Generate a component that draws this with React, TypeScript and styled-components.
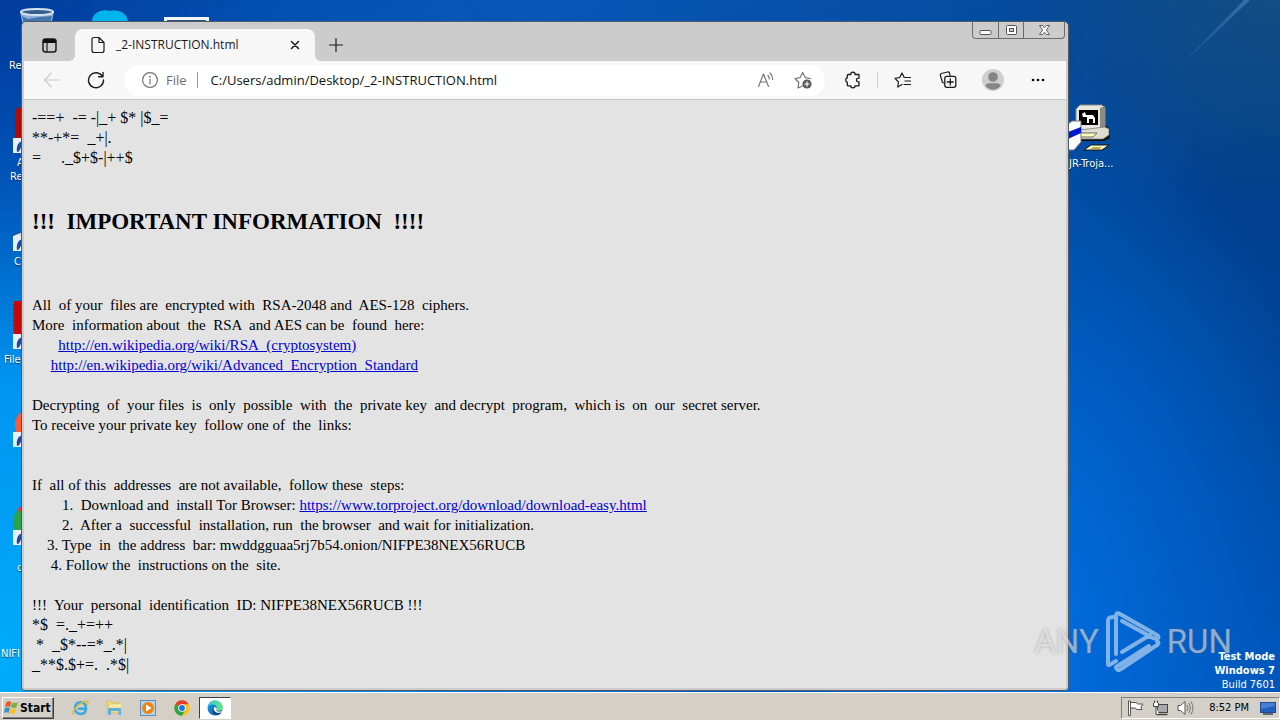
import React from "react";
import styled, { createGlobalStyle, css } from "styled-components";

const uiFont = `"Open Sans", "Noto Sans", sans-serif`;
const shellFont = `"DejaVu Sans Condensed", "DejaVu Sans", sans-serif`;
const pageFont = `"Liberation Serif", "Times New Roman", serif`;

const GlobalStyle = createGlobalStyle`
  * { box-sizing: border-box; }
  body { margin: 0; background: #0058b8; }
  button { border: 0; padding: 0; margin: 0; background: none; font: inherit; color: inherit; }
  svg { display: block; flex: none; }
`;

const Screen = styled.div`
  display: flex;
  flex-direction: column;
  min-height: 100vh;
`;

const Desktop = styled.main`
  position: relative;
  flex: 1;
  display: flex;
  padding: 21px 211px 1px 21px;
  overflow: hidden;
  background:
    radial-gradient(ellipse 35% 55% at 0% 0%, #003c9e 0%, rgba(0, 60, 158, 0.6) 45%, transparent 100%),
    radial-gradient(ellipse 22% 30% at 100% 0%, rgba(24, 78, 128, 0.8) 0%, transparent 100%),
    radial-gradient(ellipse 60% 120% at 0% 96%, #00abfb 0%, #0094f0 35%, rgba(0, 124, 228, 0.8) 65%, transparent 100%),
    radial-gradient(ellipse 24% 85% at 80% 92%, #006fe2 0%, rgba(0, 108, 220, 0.8) 30%, transparent 100%),
    radial-gradient(ellipse 60% 60% at 42% 0%, #0856b8 0%, transparent 100%),
    linear-gradient(180deg, #024690 0%, #003f8c 28%, #0052b4 100%);
`;

const LightStreak = styled.svg`
  position: absolute;
  top: 0;
  right: 0;
`;

const Shortcut = styled.div<{ $x: number; $y: number }>`
  position: absolute;
  left: ${(p) => p.$x}px;
  top: ${(p) => p.$y}px;
`;

const ShortcutLabel = styled(Shortcut)`
  color: #fff;
  font: 11px/14px ${shellFont};
  white-space: nowrap;
  text-shadow: 0 1px 1px rgba(0, 20, 60, 0.7);
`;

const Window = styled.section`
  position: relative;
  flex: 1;
  min-width: 0;
  display: flex;
  flex-direction: column;
  padding: 0 2px 2px;
  border: 1px solid #4f5a66;
  border-radius: 5px 5px 4px 4px;
  background: #cccccc;
`;

const TitleBar = styled.header`
  display: flex;
  align-items: flex-end;
  height: 39px;
`;

const StripButton = styled.button<{ $wide?: boolean }>`
  display: flex;
  align-items: center;
  justify-content: center;
  width: ${(p) => (p.$wide ? 51 : 42)}px;
  height: 32px;
`;

const Tab = styled.div`
  position: relative;
  display: flex;
  align-items: center;
  width: 240px;
  height: 32px;
  padding: 0 12px 0 15px;
  border-radius: 8px 8px 0 0;
  background: #f7f7f7;
  &::before,
  &::after {
    content: "";
    position: absolute;
    bottom: 0;
    width: 6px;
    height: 6px;
  }
  &::before {
    left: -6px;
    background: radial-gradient(circle at 0 0, transparent 6px, #f7f7f7 6px);
  }
  &::after {
    right: -6px;
    background: radial-gradient(circle at 100% 0, transparent 6px, #f7f7f7 6px);
  }
`;

const TabTitle = styled.span`
  flex: 1;
  margin-left: 10px;
  color: #1a1a1a;
  font: 12px/16px ${uiFont};
`;

const CaptionButtons = styled.div`
  display: flex;
  align-self: flex-start;
  height: 17px;
  margin-left: auto;
  margin-right: 1px;
  border: 1px solid #6c6c6c;
  border-top: 0;
  border-radius: 0 0 4px 4px;
`;

const CaptionButton = styled.button<{ $wide?: boolean }>`
  display: flex;
  align-items: center;
  justify-content: center;
  width: ${(p) => (p.$wide ? 41 : 25)}px;
  & + & {
    border-left: 1px solid #6c6c6c;
  }
`;

const Toolbar = styled.div`
  display: flex;
  align-items: center;
  height: 39px;
  padding: 0 6px;
  background: #f7f7f7;
  border-bottom: 1px solid #c9c9c9;
`;

const ToolButton = styled.button<{ $wide?: boolean }>`
  display: flex;
  align-items: center;
  justify-content: center;
  width: ${(p) => (p.$wide ? 45 : 44)}px;
  height: 30px;
`;

const AddressBar = styled.div`
  flex: 1;
  min-width: 0;
  display: flex;
  align-items: center;
  height: 31px;
  margin: 0 6px;
  padding: 0 4px 0 18px;
  border-radius: 16px;
  background: #fff;
`;

const SiteInfo = styled.button`
  display: flex;
  align-items: center;
  gap: 8px;
  color: #6e6e6e;
  font: 13px/18px ${uiFont};
`;

const Divider = styled.span`
  width: 1px;
  height: 16px;
  margin: 0 2px;
  background: #d0d0d0;
`;

const AddressDivider = styled(Divider)`
  margin: 0 13px 0 10px;
  background: #9a9a9a;
`;

const AddressInput = styled.input`
  flex: 1;
  min-width: 0;
  border: 0;
  padding: 0;
  outline: 0;
  background: none;
  color: #111;
  font: 13px/20px ${uiFont};
`;

const AddressButton = styled.button`
  display: flex;
  align-items: center;
  justify-content: center;
  width: 37px;
  height: 28px;
`;

const Page = styled.article`
  flex: 1;
  padding: 8px 8px 13px;
  background: #e3e3e3;
  color: #000;
  font: 16px/20px ${pageFont};
`;

const Line = styled.p`
  min-height: 20px;
  margin: 0;
  white-space: pre-wrap;
  a {
    color: #0000d0;
  }
`;

const Text = styled(Line)`
  font-size: 15px;
`;

const Heading = styled.h1`
  margin: 40px 0 59px;
  font-size: 23px;
  line-height: 28px;
  white-space: pre-wrap;
`;

const Watermark = styled.div`
  position: absolute;
  right: 48px;
  bottom: 18px;
  display: flex;
  align-items: center;
  gap: 6px;
  color: rgba(255, 255, 255, 0.5);
  font: 33px/64px Roboto, sans-serif;
  text-shadow: 0 0 3px rgba(90, 90, 90, 0.45);
`;

const BuildInfo = styled.div`
  position: absolute;
  right: 5px;
  bottom: 0;
  color: #fff;
  text-align: right;
  font: 11px/14px ${shellFont};
  strong {
    display: block;
  }
  span {
    display: block;
    line-height: 14px;
  }
`;

const Taskbar = styled.footer`
  display: flex;
  align-items: center;
  height: 28px;
  padding: 2px 0 0 2px;
  background: #d4d0c8;
  border-top: 1px solid #fff;
  color: #000;
  font: 11px/14px ${shellFont};
`;

const StartButton = styled.button`
  display: flex;
  align-items: center;
  gap: 1px;
  width: 52px;
  height: 22px;
  margin-right: 9px;
  padding-left: 1px;
  border: 1px solid;
  border-color: #fff #404040 #404040 #fff;
  box-shadow: inset -1px -1px #808080;
  font-size: 12px;
  font-weight: 700;
`;

const TaskButton = styled.button<{ $active?: boolean }>`
  display: flex;
  align-items: center;
  justify-content: center;
  width: ${(p) => (p.$active ? 32 : 34)}px;
  height: 22px;
  ${(p) =>
    p.$active &&
    css`
      background: #fff;
      border: 1px solid;
      border-color: #404040 #fff #fff #404040;
    `}
`;

const Tray = styled.div`
  display: flex;
  align-items: center;
  gap: 8px;
  height: 22px;
  margin-left: auto;
  padding: 0 3px 0 5px;
  border: 1px solid;
  border-color: #808080 #fff #fff #808080;
`;

const Clock = styled.time`
  margin: 0 3px 0 7px;
`;

const ink = { fill: "none", stroke: "#1b1b1b", strokeWidth: 1.2, strokeLinecap: "round", strokeLinejoin: "round" } as const;
const grey = { ...ink, stroke: "#757575" };

const ShortcutArrow = () => (
  <g>
    <rect x="0" y="0" width="14" height="15" fill="#e8f0f8" />
    <path d="M10 3C5 4 3 8 4 14C8 14 6 9 11 8Z" fill="#1c4a9c" />
  </g>
);

const edge = (
  <>
    <defs>
      <linearGradient id="edgeA" x1="0" y1="0" x2="1" y2="1">
        <stop offset="0" stopColor="#1b9de2" />
        <stop offset="1" stopColor="#0c59a4" />
      </linearGradient>
      <linearGradient id="edgeB" x1="0" y1="0" x2="1" y2="0">
        <stop offset="0" stopColor="#35c1f1" />
        <stop offset="1" stopColor="#66eb6e" />
      </linearGradient>
    </defs>
    <circle cx="8" cy="8" r="7.5" fill="url(#edgeA)" />
    <path d="M.6 7.2C1.2 3 4.300 .4 8.100 .4C12.500 .4 15.700 3.500 15.700 6.900C15.700 9.500 13.800 10.800 11.800 10.800C10.200 10.800 9.300 10.200 9.500 9.500C10.600 8 9.500 4.500 6 4.500C3.500 4.500 1.500 5.800 .6 7.200Z" fill="url(#edgeB)" />
    <path d="M9.500 9.500C8.800 10.800 11 12.400 14.700 11.300L13 14L9 13C6 12 5.500 9 7.500 7.300C9.200 6.600 10.200 8.300 9.500 9.500Z" fill="#fff" />
    <path d="M6.200 7.500C4 11 6.500 15.200 10.300 15.200C12 15 13.700 14 14.600 12.200C10 14 6.500 11.500 6.200 7.500Z" fill="#114a8b" />
  </>
);

function DesktopIcons() {
  return (
    <>
      <Shortcut $x={18} $y={7}>
        <svg width="38" height="30" viewBox="0 0 38 30">
          <path d="M2 4L7 30H31L36 4Z" fill="#8fb0d4" />
          <path d="M4 9L10 12L22 10L34 9L31 20H7Z" fill="#4474ae" />
          <ellipse cx="19" cy="5" rx="16" ry="3" fill="#375e91" stroke="#d3e1ee" strokeWidth="2" />
        </svg>
      </Shortcut>
      <Shortcut $x={90} $y={9}>
        <svg width="42" height="34" viewBox="0 0 42 34">
          <path d="M2 14C1 4 12 -1 20 2C30 0 38 5 38 14V30H4Z" fill="#00b4ee" />
        </svg>
      </Shortcut>
      <Shortcut $x={164} $y={17}>
        <svg width="45" height="10"><rect width="45" height="10" fill="#f4f8fb" /><rect x="3" y="3" width="39" height="7" fill="#27517f" /></svg>
      </Shortcut>
      <ShortcutLabel $x={9} $y={59}>Re</ShortcutLabel>
      <Shortcut $x={13} $y={105}>
        <svg width="24" height="50" viewBox="0 0 24 50">
          <path d="M2 34V9Q2 2 9 2H24V34Z" fill="#b30b00" />
          <g transform="translate(0 33)"><ShortcutArrow /></g>
        </svg>
      </Shortcut>
      <ShortcutLabel $x={17} $y={156}>A</ShortcutLabel>
      <ShortcutLabel $x={10} $y={170}>Re</ShortcutLabel>
      <Shortcut $x={13} $y={231}>
        <svg width="24" height="22" viewBox="0 0 24 22">
          <path d="M1 4L12 0V8H1Z" fill="#d9e4ec" stroke="#335" strokeWidth=".7" />
          <g transform="translate(0 5)"><ShortcutArrow /></g>
        </svg>
      </Shortcut>
      <ShortcutLabel $x={14} $y={255}>C</ShortcutLabel>
      <Shortcut $x={12} $y={300}>
        <svg width="24" height="50" viewBox="0 0 24 50">
          <path d="M2 1H24V35H2V31L1 29L2 27L1 25L2 23L1 21L2 19L1 17L2 15L1 13L2 11L1 9L2 7L1 5L2 3Z" fill="#c40808" />
          <g transform="translate(1 34)"><ShortcutArrow /></g>
        </svg>
      </Shortcut>
      <ShortcutLabel $x={4} $y={353}>File</ShortcutLabel>
      <Shortcut $x={13} $y={405}>
        <svg width="24" height="44" viewBox="0 0 24 44">
          <circle cx="19" cy="20" r="17" fill="#ff5a36" />
          <g transform="translate(0 27)"><ShortcutArrow /></g>
        </svg>
      </Shortcut>
      <Shortcut $x={13} $y={501}>
        <svg width="24" height="46" viewBox="0 0 24 46">
          <circle cx="18" cy="21" r="18" fill="#2ba24c" />
          <path d="M4 9Q10 2 18 2V14Z" fill="#e33b2e" />
          <g transform="translate(0 29)"><ShortcutArrow /></g>
        </svg>
      </Shortcut>
      <ShortcutLabel $x={17} $y={561}>c</ShortcutLabel>
      <ShortcutLabel $x={1} $y={647}>NIFI</ShortcutLabel>
      <Shortcut $x={1064} $y={104}>
        <svg width="48" height="50" viewBox="0 0 48 50">
          <path d="M13 26L43 22L46 26V34L40 37H13Z" fill="#111" />
          <path d="M12 5L16 1H38L41 4V22L37 26H15L12 23Z" fill="#e9e7e0" stroke="#8a8a84" />
          <path d="M36 4L41 2V23L36 26Z" fill="#8c8a82" />
          <rect x="15" y="6" width="19" height="15" fill="#000" />
          <path d="M18 10L21 8L22 11H29L31 14V19H29V15H25V19H23V13L19 13Z" fill="#fff" />
          <path d="M15 26L41 23L45 25V31L39 35H15Z" fill="#dedbd2" stroke="#777" strokeWidth=".7" />
          <path d="M16 29H33L29 33H14Z" fill="#fffcc0" stroke="#333" strokeWidth=".7" />
          <path d="M27 41H45L38 46H20Z" fill="#fffcd0" stroke="#111" />
          <path d="M29 43H38L35 45H26Z" fill="#bfa940" />
          <path d="M4 20L8 17H17V38L10 46H4Z" fill="#fff" stroke="#777" />
          <path d="M4 28L17 23V29L4 35Z" fill="#0018c8" />
        </svg>
      </Shortcut>
      <ShortcutLabel $x={1069} $y={157}>JR-Troja...</ShortcutLabel>
    </>
  );
}

function BrowserTop() {
  return (
    <TitleBar>
      <StripButton $wide aria-label="Tab actions">
        <svg width="15" height="15" viewBox="0 0 15 15">
          <rect x="1" y="1" width="13" height="13" rx="2.500" {...ink} strokeWidth={1.5} />
          <path d="M1 5V3Q1 1 3 1H12Q14 1 14 3V5Z" fill="#111" />
          <path d="M5 5V14" {...ink} />
        </svg>
      </StripButton>
      <Tab>
        <svg width="16" height="18" viewBox="0 0 16 18">
          <path d="M4 1.500H9L14 6.500V14.500Q14 16.500 12 16.500H4Q2 16.500 2 14.500V3.500Q2 1.500 4 1.500ZM9 1.500V6.500H14" {...ink} />
        </svg>
        <TabTitle>_2-INSTRUCTION.html</TabTitle>
        <button aria-label="Close tab">
          <svg width="16" height="16" viewBox="0 0 16 16"><path d="M4.500 4.500L11.500 11.500M11.500 4.500L4.500 11.500" {...ink} strokeWidth={1.5} /></svg>
        </button>
      </Tab>
      <StripButton aria-label="New tab">
        <svg width="16" height="16" viewBox="0 0 16 16"><path d="M8 1.500V14.500M1.500 8H14.500" {...ink} /></svg>
      </StripButton>
      <CaptionButtons>
        <CaptionButton aria-label="Minimize">
          <svg width="13" height="12"><rect x="1" y="6.500" width="11" height="4" rx="1" fill="#fff" stroke="#555" /></svg>
        </CaptionButton>
        <CaptionButton aria-label="Maximize">
          <svg width="13" height="12"><rect x="1.500" y="1.500" width="10" height="9" rx="1" fill="#fff" stroke="#555" /><rect x="4.500" y="4.500" width="4" height="3" fill="#ccc" stroke="#555" /></svg>
        </CaptionButton>
        <CaptionButton $wide aria-label="Close">
          <svg width="13" height="12" viewBox="0 0 13 12">
            <path d="M1.500 1.500H4.500L6.500 3.800L8.500 1.500H11.500L8.300 6L11.500 10.500H8.500L6.500 8.200L4.500 10.500H1.500L4.700 6Z" fill="#fff" stroke="#555" strokeWidth=".9" />
          </svg>
        </CaptionButton>
      </CaptionButtons>
    </TitleBar>
  );
}

function BrowserToolbar() {
  return (
    <Toolbar>
      <ToolButton aria-label="Back">
        <svg width="18" height="16" viewBox="0 0 18 16"><path d="M17 8H1.500M8 1.500L1.500 8L8 14.500" {...ink} stroke="#cbcbcb" /></svg>
      </ToolButton>
      <ToolButton aria-label="Refresh">
        <svg width="18" height="18" viewBox="0 0 18 18"><path d="M15.500 5.500A7.500 7.500 0 1 0 16.500 9M16 1.500V5.800H11.700" {...ink} strokeWidth={1.4} /></svg>
      </ToolButton>
      <AddressBar>
        <SiteInfo>
          <svg width="16" height="16" viewBox="0 0 16 16"><circle cx="8" cy="8" r="7.400" {...grey} /><path d="M8 7V12" {...grey} /><circle cx="8" cy="4.700" r=".9" fill="#757575" /></svg>
          File
        </SiteInfo>
        <AddressDivider />
        <AddressInput aria-label="Address" defaultValue="C:/Users/admin/Desktop/_2-INSTRUCTION.html" />
        <AddressButton aria-label="Read aloud">
          <svg width="18" height="16" viewBox="0 0 18 16"><path d="M1.500 14.500L6.500 2L11.500 14.500M3.300 10H9.700M11 3.500Q12.200 4.800 12.300 7M13 1Q15.800 3.500 15.700 7.500" {...grey} /></svg>
        </AddressButton>
        <AddressButton aria-label="Add to favorites">
          <svg width="18" height="18" viewBox="0 0 18 18">
            <path d="M8.500 15L4 17L4.800 11.500L1 7.500L6.200 6.600L8.700 1.500L11.200 6.600L16.500 7.500" {...grey} />
            <circle cx="13" cy="13" r="4.600" fill="#5b5b5b" /><path d="M13 10.500V15.500M10.500 13H15.500" stroke="#fff" strokeWidth="1.200" />
          </svg>
        </AddressButton>
      </AddressBar>
      <ToolButton aria-label="Extensions">
        <svg width="16" height="18" viewBox="0 0 16 18">
          <path d="M3.500 3.500H5.700Q5.700 1.200 7.900 1.200Q10.100 1.200 10.100 3.500H14V7.200Q11.500 7 11.500 9Q11.500 11 14 10.800V14.800H10.100Q10.100 16.800 7.900 16.800Q5.700 16.800 5.700 14.800H3Q2.300 14.800 2.300 14V11.100Q.8 11.100 .8 9Q.8 6.900 2.300 6.900V4.500Q2.300 3.500 3.500 3.500Z" {...ink} strokeWidth={1.3} />
        </svg>
      </ToolButton>
      <Divider />
      <ToolButton $wide aria-label="Favorites">
        <svg width="18" height="18" viewBox="0 0 18 18">
          <path d="M8 13.500L3.700 16L4.500 11L1 7.300L5.700 6.500L8 2L10.200 6.500H16.500M11 10H16.500M10 13.500H16.500" {...ink} />
        </svg>
      </ToolButton>
      <ToolButton $wide aria-label="Collections">
        <svg width="18" height="18" viewBox="0 0 18 18">
          <path d="M5 12L3.500 11.500L1.300 4.300Q1 3 2.300 2.500L8.500 1Q10 .7 10.500 2L11 4.500" {...ink} />
          <rect x="5.800" y="5.300" width="11" height="11" rx="2" {...ink} strokeWidth={1.3} /><path d="M11.300 8V14M8.300 11H14.300" {...ink} strokeWidth={1.3} />
        </svg>
      </ToolButton>
      <ToolButton $wide aria-label="Profile">
        <svg width="22" height="22" viewBox="0 0 22 22">
          <circle cx="11" cy="11" r="11" fill="#cfcfcf" /><circle cx="11" cy="8" r="4.800" fill="#858585" /><path d="M3.500 17Q4 14.300 7 14.300H15Q18 14.300 18.500 17Q11 24.500 3.500 17Z" fill="#858585" />
        </svg>
      </ToolButton>
      <ToolButton $wide aria-label="Settings and more">
        <svg width="16" height="4"><circle cx="3" cy="2" r="1.300" /><circle cx="8" cy="2" r="1.300" /><circle cx="13" cy="2" r="1.300" /></svg>
      </ToolButton>
    </Toolbar>
  );
}

function Note() {
  return (
    <Page>
      <Line>{"-==+  -= -|_+ $* |$_="}</Line>
      <Line>{"**-+*=  _+|."}</Line>
      <Line>{"=     ._$+$-|++$"}</Line>
      <Heading>{"!!!  IMPORTANT INFORMATION  !!!!"}</Heading>
      <Text>{"All  of your  files are  encrypted with  RSA-2048 and  AES-128  ciphers."}</Text>
      <Text>{"More  information about  the  RSA  and AES can be  found  here:"}</Text>
      <Text>{"       "}<a href="#rsa">http://en.wikipedia.org/wiki/RSA_(cryptosystem)</a></Text>
      <Text>{"     "}<a href="#aes">http://en.wikipedia.org/wiki/Advanced_Encryption_Standard</a></Text>
      <Text />
      <Text>{"Decrypting  of  your files  is  only  possible  with  the  private key  and decrypt  program,  which is  on  our  secret server."}</Text>
      <Text>{"To receive your private key  follow one of  the  links:"}</Text>
      <Text />
      <Text />
      <Text>{"If  all of this  addresses  are not available,  follow these  steps:"}</Text>
      <Text>{"        1.  Download and  install Tor Browser: "}<a href="#tor">https://www.torproject.org/download/download-easy.html</a></Text>
      <Text>{"        2.  After a  successful  installation, run  the browser  and wait for initialization."}</Text>
      <Text>{"    3. Type  in  the address  bar: mwddgguaa5rj7b54.onion/NIFPE38NEX56RUCB"}</Text>
      <Text>{"     4. Follow the  instructions on the  site."}</Text>
      <Text />
      <Text>{"!!!  Your  personal  identification  ID: NIFPE38NEX56RUCB !!!"}</Text>
      <Line>{"*$  =._+=++"}</Line>
      <Line>{" *  _$*--=*_.*|"}</Line>
      <Line>{"_**$.$+=.  .*$|"}</Line>
    </Page>
  );
}

function ShellBar() {
  return (
    <Taskbar>
      <StartButton>
        <svg width="15" height="15" viewBox="0 0 15 15">
          <path d="M2.500 2Q5 .5 7.200 2L6 7Q4 5.700 1 7Z" fill="#e8572b" />
          <path d="M8 2.400Q11 3.800 14 2.300L12.500 7.300Q10 8.500 6.800 7.300Z" fill="#77b43f" />
          <path d="M.8 7.900Q3.500 6.700 5.800 8L4.600 13Q2 11.500 0 13Z" fill="#3f8ed0" />
          <path d="M6.600 8.300Q9.500 9.600 12.200 8.300L11 13.200Q8 14.500 5.300 13.200Z" fill="#f5c22b" />
        </svg>
        Start
      </StartButton>
      <TaskButton aria-label="Internet Explorer">
        <svg width="17" height="16" viewBox="0 0 17 16">
          <path d="M14 10Q12.500 14 8.500 14Q3 13.500 3 8Q3.500 2.500 8.500 2.300Q14 2.500 14 8.700H6" fill="none" stroke="#3ba9e0" strokeWidth="2.600" />
          <path d="M2 14.800Q-1 12 6 5.500Q13 0 15.500 1.500Q16.800 2.500 15 5.500" fill="none" stroke="#edb82c" strokeWidth="1.500" />
        </svg>
      </TaskButton>
      <TaskButton aria-label="Explorer">
        <svg width="17" height="16" viewBox="0 0 17 16">
          <path d="M1 1H6L7 3H14V13H1Z" fill="#f0d878" stroke="#d2b24a" strokeWidth=".6" /><path d="M3 4H16V8H3Z" fill="#f9ecaa" stroke="#d9bd5c" strokeWidth=".5" /><path d="M2 15V9Q2 8 3.500 8H13.500Q15 8 15 9V15H12.500V11H5V15Z" fill="#5fb0dc" />
        </svg>
      </TaskButton>
      <TaskButton aria-label="Media Player">
        <svg width="16" height="16" viewBox="0 0 16 16">
          <rect x=".5" y=".5" width="15" height="15" fill="#b4d4ec" stroke="#5c8fbd" /><circle cx="8" cy="8" r="6" fill="#f3830f" /><path d="M6 4.500L11.500 8L6 11.500Z" fill="#fff" />
        </svg>
      </TaskButton>
      <TaskButton aria-label="Chrome">
        <svg width="16" height="16" viewBox="0 0 16 16">
          <circle cx="8" cy="8" r="7.700" fill="#fbc116" /><path d="M8 8L1.300 4.200A7.700 7.700 0 0 1 14.700 4.200H8Z" fill="#e33b2e" /><path d="M1.300 4.200A7.700 7.700 0 0 0 8 15.700L11.200 9.800L8 8Z" fill="#2ba24c" /><circle cx="8" cy="8" r="3.800" fill="#fff" /><circle cx="8" cy="8" r="2.900" fill="#1a73e8" />
        </svg>
      </TaskButton>
      <TaskButton $active aria-label="Edge">
        <svg width="16" height="16" viewBox="0 0 16 16">{edge}</svg>
      </TaskButton>
      <Tray>
        <svg width="17" height="16" viewBox="0 0 17 16"><path d="M3.500 15.500V2.500H9.500L10.500 4H16L14 7L15 9.500H9.500L8.500 8H4" fill="#fff" stroke="#555" /><path d="M1.500 1V15.500H3.500V1Z" fill="#fff" stroke="#555" /></svg>
        <svg width="17" height="16" viewBox="0 0 17 16"><rect x="5.500" y="4.500" width="10" height="8" fill="#aaa" stroke="#444" /><path d="M5 14.500H15.500" stroke="#444" strokeWidth="1.500" /><path d="M1.500 3V6.500H6.500V3M2.500 3V.5M5.500 3V.5M4 6.500V14.500H7" fill="#fff" stroke="#444" /></svg>
        <svg width="17" height="16" viewBox="0 0 17 16"><path d="M1 5.500H3.500L8 1.500V14.500L3.500 10.500H1Z" fill="#fff" stroke="#555" /><path d="M10 5Q12 8 10 11M12 3Q15 8 12 13M14 1.500Q18 8 14 14.500" fill="none" stroke="#777" /></svg>
        <Clock>8:52 PM</Clock>
        <svg width="16" height="14" viewBox="0 0 16 14"><rect x=".5" y="1.500" width="15" height="10" fill="#1f5fc0" stroke="#234a8c" /><path d="M1 2H15V5L1 8Z" fill="#6ba0e6" opacity=".5" /><path d="M3 13H13" stroke="#345" strokeWidth="1.500" /></svg>
      </Tray>
    </Taskbar>
  );
}

export default function App() {
  return (
    <Screen>
      <GlobalStyle />
      <Desktop>
        <LightStreak width="120" height="80" viewBox="0 0 120 80">
          <defs>
            <linearGradient id="streak" x1="1" y1="0" x2="0" y2="1">
              <stop offset="0" stopColor="#4d86c0" stopOpacity=".6" />
              <stop offset="1" stopColor="#4d86c0" stopOpacity="0" />
            </linearGradient>
          </defs>
          <path d="M84 0H90L10 76Z" fill="url(#streak)" />
        </LightStreak>
        <DesktopIcons />
        <Window>
          <BrowserTop />
          <BrowserToolbar />
          <Note />
        </Window>
        <Watermark>
          <span>ANY</span>
          <svg width="56" height="64" viewBox="0 0 56 64" fill="none" stroke="currentColor" strokeWidth="4" strokeLinejoin="round" strokeLinecap="round">
            <path d="M8 7Q3 7 3 11V54Q3 56 6 54L11 51M11 44V5Q12 2 15 4L52 25Q55 27 52 29L48 28L17 11M17 42L45 25M52 31Q55 33 52 35L16 59Q12 62 11 57L44 36" />
          </svg>
          <span>RUN</span>
        </Watermark>
        <BuildInfo>
          <strong>Test Mode</strong>
          <strong>Windows 7</strong>
          <span>Build 7601</span>
        </BuildInfo>
      </Desktop>
      <ShellBar />
    </Screen>
  );
}
